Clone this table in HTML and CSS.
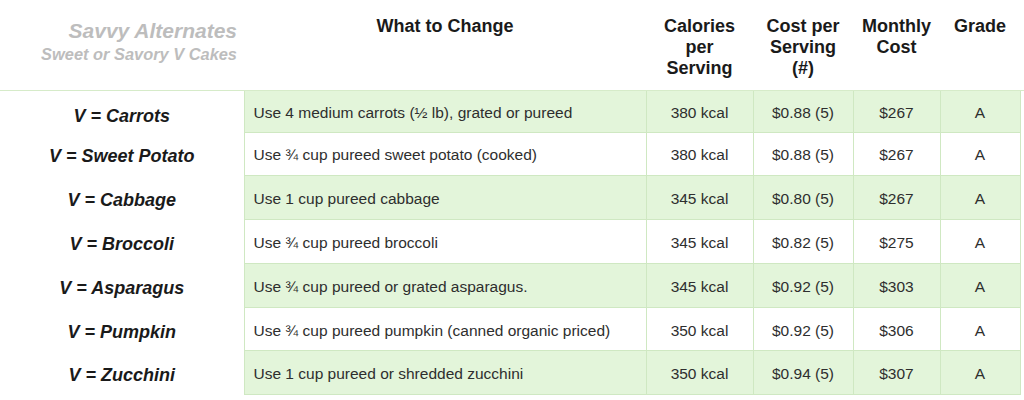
FILE: index.html
```html
<!DOCTYPE html>
<html>
<head>
<meta charset="utf-8">
<link rel="stylesheet" href="styles.css">
</head>
<body>
<div class="head">
  <div class="title">
    <div class="t1">Savvy Alternates</div>
    <div class="t2">Sweet or Savory V Cakes</div>
  </div>
  <div class="hcell">What to Change</div>
  <div class="hcell">Calories<br>per<br>Serving</div>
  <div class="hcell">Cost per<br>Serving<br>(#)</div>
  <div class="hcell">Monthly<br>Cost</div>
  <div class="hcell">Grade</div>
</div>
<div class="rule">
<table class="grid">
  <colgroup>
    <col class="c1"><col class="c2"><col class="c3"><col class="c4"><col class="c5"><col class="c6">
  </colgroup>
  <tbody>
    <tr class="g"><th>V = Carrots</th><td class="txt">Use 4 medium carrots (½ lb), grated or pureed</td><td>380 kcal</td><td>$0.88 (5)</td><td>$267</td><td>A</td></tr>
    <tr><th>V = Sweet Potato</th><td class="txt">Use ¾ cup pureed sweet potato (cooked)</td><td>380 kcal</td><td>$0.88 (5)</td><td>$267</td><td>A</td></tr>
    <tr class="g"><th>V = Cabbage</th><td class="txt">Use 1 cup pureed cabbage</td><td>345 kcal</td><td>$0.80 (5)</td><td>$267</td><td>A</td></tr>
    <tr><th>V = Broccoli</th><td class="txt">Use ¾ cup pureed broccoli</td><td>345 kcal</td><td>$0.82 (5)</td><td>$275</td><td>A</td></tr>
    <tr class="g"><th>V = Asparagus</th><td class="txt">Use ¾ cup pureed or grated asparagus.</td><td>345 kcal</td><td>$0.92 (5)</td><td>$303</td><td>A</td></tr>
    <tr><th>V = Pumpkin</th><td class="txt">Use ¾ cup pureed pumpkin (canned organic priced)</td><td>350 kcal</td><td>$0.92 (5)</td><td>$306</td><td>A</td></tr>
    <tr class="g"><th>V = Zucchini</th><td class="txt">Use 1 cup pureed or shredded zucchini</td><td>350 kcal</td><td>$0.94 (5)</td><td>$307</td><td>A</td></tr>
  </tbody>
</table>
</div>
</body>
</html>
```
FILE: styles.css
```css
html, body {
  margin: 0;
  padding: 0;
  background: #ffffff;
}
body {
  font-family: "Liberation Sans", Arial, sans-serif;
  color: #1c1c1c;
  width: 1024px;
  height: 400px;
  overflow: hidden;
}
.head {
  display: grid;
  grid-template-columns: 244px 402px 107px 100px 87px 80px;
  height: 90px;
}
.title {
  text-align: right;
  padding-right: 7px;
  padding-top: 18px;
  font-weight: bold;
  font-style: italic;
  color: #bdbdbd;
}
.t1 {
  font-size: 21px;
  line-height: 25px;
}
.t2 {
  font-size: 16.4px;
  line-height: 20px;
  margin-top: 1px;
}
.hcell {
  text-align: center;
  font-weight: bold;
  font-size: 18px;
  line-height: 21px;
  padding-top: 16px;
  color: #1a1a1a;
}
.rule {
  border-top: 1px solid #d6ebc9;
}
.grid {
  border-collapse: collapse;
  table-layout: fixed;
  width: 1020px;
}
.c1 { width: 244px; }
.c2 { width: 402px; }
.c3 { width: 107px; }
.c4 { width: 100px; }
.c5 { width: 87px; }
.c6 { width: 80px; }
.grid th {
  font-size: 18px;
  font-weight: bold;
  font-style: italic;
  text-align: center;
  color: #1a1a1a;
  padding: 6px 0 0 0;
  background: #ffffff;
  border: none;
  height: 43.8px;
  box-sizing: border-box;
}
.grid td {
  font-size: 15.5px;
  text-align: center;
  color: #2e2e2e;
  border: 1px solid #cfe8c2;
  padding: 3px 0 0 0;
  height: 43.8px;
  box-sizing: border-box;
  vertical-align: middle;
}
.grid tr:first-child th,
.grid tr:first-child td {
  height: 41px;
}
.grid tr:first-child th {
  padding-top: 10px;
}
.grid tr:first-child td {
  border-top: none;
  padding-top: 4px;
}
.grid td.txt {
  text-align: left;
  padding-left: 9px;
}
.grid tr.g td {
  background: #e3f5da;
}
```
